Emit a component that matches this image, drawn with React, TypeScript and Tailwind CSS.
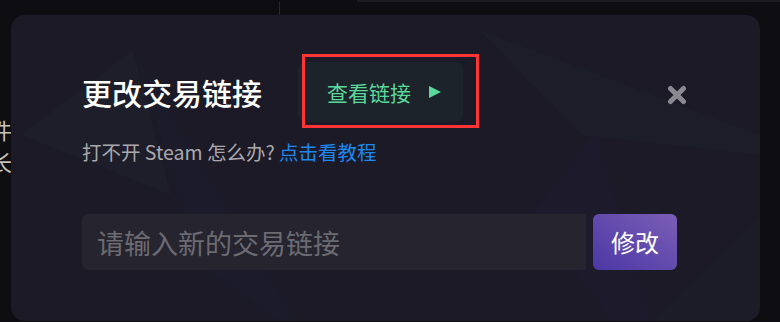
import { useState } from 'react';

const font = { fontFamily: '"Noto Sans CJK SC", "Noto Sans", sans-serif' };

/**
 * 关闭按钮图标
 */
const CloseIcon = () => (
    <svg width="20" height="20" viewBox="0 0 20 20">
        <path d="M3.5 3.5 L16.5 16.5 M16.5 3.5 L3.5 16.5" stroke="#8b8a91" strokeWidth="5" strokeLinecap="round" />
    </svg>
);

/**
 * 弹窗背景的几何装饰
 */
const Decor = () => (
    <svg className="absolute inset-0 h-full w-full" viewBox="0 0 749 306" preserveAspectRatio="none">
        <polygon points="122,35 10,120 160,180" fill="#1e1d2a" />
        <polygon points="160,100 122,35 190,250 300,330" fill="#1d1c2b" opacity="0.7" />
        <polygon points="468,15 749,120 749,140 570,120" fill="#1d1c29" />
        <polygon points="585,115 520,200 600,306 640,306" fill="#1e1d2d" opacity="0.7" />
        <polygon points="640,306 749,200 749,306" fill="#1c1b28" />
    </svg>
);

export default function App() {
    const [link, setLink] = useState('');

    return (
        <div className="relative h-[322px] w-[780px] overflow-hidden bg-[#0e0d12]" style={font}>
            {/* 背后页面的残留内容 */}
            <div className="h-[2px] ml-[357px] bg-[#1c1b22]" />
            <div className="ml-[279px] h-[13px] w-px bg-[#2a2931]" />
            <div className="-ml-[10px] mt-[98px] text-[22px] leading-[32px] text-[#c8c4bc]">
                <p>件</p>
                <p>长:</p>
            </div>

            {/* 弹窗 */}
            <div className="absolute left-[11px] top-[15px] h-[306px] w-[749px] overflow-hidden rounded-[14px] bg-[#1b1a26]">
                <Decor />
                <div className="relative pl-[71px] pr-[73px] pt-[47px]">
                    <div className="flex h-[60px] items-center">
                        <h2 className="w-[180px] text-[30px] font-medium leading-none text-white">更改交易链接</h2>
                        <div className="relative ml-[36px]">
                            <button className="flex h-[60px] w-[165px] items-center rounded-[8px] bg-[#1d232b] pl-[29px]">
                                <span className="text-[21px] leading-none text-[#5bd99b]">查看链接</span>
                                <svg className="ml-[18px]" width="12" height="12" viewBox="0 0 12 12">
                                    <polygon points="0,0 12,6 0,12" fill="#5bd99b" />
                                </svg>
                            </button>
                            <div className="pointer-events-none absolute -top-[8px] left-[4px] h-[74px] w-[177px] border-[3px] border-[#ff3535]" />
                        </div>
                        <button className="ml-auto mt-[6px]" aria-label="关闭">
                            <CloseIcon />
                        </button>
                    </div>

                    <p className="mt-[17px] text-[19.5px] leading-[26px] text-[#a9a8ad]">
                        打不开 Steam 怎么办? <a className="text-[#1e88f0]">点击看教程</a>
                    </p>

                    <div className="mt-[49px] flex gap-[7px]">
                        <input
                            value={link}
                            onChange={(e) => setLink(e.target.value)}
                            placeholder="请输入新的交易链接"
                            className="h-[56px] w-[504px] rounded-l-[6px] bg-[#25242f] pl-[15px] text-[27px] text-white outline-none placeholder:text-[#6c6b72]"
                        />
                        <button className="h-[56px] w-[84px] rounded-[6px] bg-gradient-to-tr from-[#4c36a4] to-[#7b5eb6] text-[24px] text-white">
                            修改
                        </button>
                    </div>
                </div>
            </div>
        </div>
    );
}
